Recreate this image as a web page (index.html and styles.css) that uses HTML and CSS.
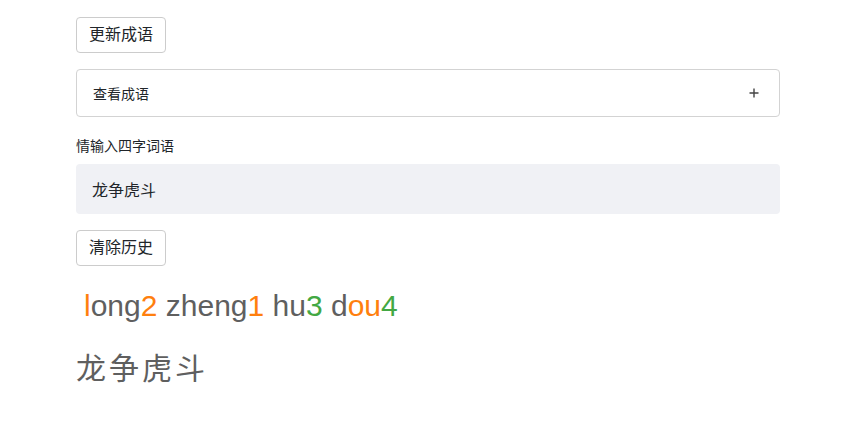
FILE: index.html
```html
<!DOCTYPE html>
<html lang="zh">
<head>
<meta charset="utf-8">
<link rel="stylesheet" href="styles.css">
</head>
<body>
<div class="page">
  <button class="btn">更新成语</button>
  <div class="accordion">
    <span>查看成语</span>
    <svg class="plus" width="10" height="10" viewBox="0 0 10 10"><path d="M5 0.5v9M0.5 5h9" stroke="#444" stroke-width="1.4"/></svg>
  </div>
  <label class="label">情输入四字词语</label>
  <div class="input">龙争虎斗</div>
  <button class="btn">清除历史</button>
  <div class="pinyin"><span class="o">l</span>ong<span class="o">2</span> zheng<span class="o">1</span> hu<span class="g">3</span> d<span class="o">ou</span><span class="g">4</span></div>
  <div class="hanzi">龙争虎斗</div>
</div>
</body>
</html>
```

FILE: styles.css
```css
html, body {
  margin: 0;
  padding: 0;
  background: #fff;
}
body {
  font-family: "Liberation Sans", "Noto Sans CJK SC", sans-serif;
  color: #212529;
}
.page {
  width: 704px;
  margin-left: 76px;
  padding-top: 17px;
  display: flex;
  flex-direction: column;
  align-items: flex-start;
}
.btn {
  font-family: "Liberation Sans", "Noto Sans CJK SC", sans-serif;
  font-size: 16px;
  color: #212529;
  background: #fff;
  border: 1px solid #ccc;
  border-radius: 4px;
  height: 36px;
  padding: 0 12px;
  line-height: 34px;
}
.accordion {
  margin-top: 16px;
  width: 100%;
  box-sizing: border-box;
  height: 48px;
  border: 1px solid #d3d3d3;
  border-radius: 4px;
  display: flex;
  align-items: center;
  justify-content: space-between;
  padding: 0 20px 0 16px;
  font-size: 14px;
  color: #212529;
}
.plus { display: block; }
.label {
  margin-top: 20px;
  font-size: 14px;
  line-height: 18px;
  color: #212529;
}
.input {
  margin-top: 9px;
  width: 100%;
  box-sizing: border-box;
  height: 50px;
  background: #f0f1f5;
  border-radius: 4px;
  padding: 0 16px;
  display: flex;
  align-items: center;
  font-size: 16px;
  color: #212529;
}
.input + .btn { margin-top: 16px; }
.pinyin {
  margin-top: 22px;
  padding-left: 8px;
  font-size: 30px;
  line-height: 36px;
  color: #5f5f5f;
}
.o { color: #ff7f0e; }
.g { color: #43a843; }
.hanzi {
  margin-top: 25px;
  font-size: 30px;
  line-height: 40px;
  letter-spacing: 3px;
  color: #5f5f5f;
}
```
